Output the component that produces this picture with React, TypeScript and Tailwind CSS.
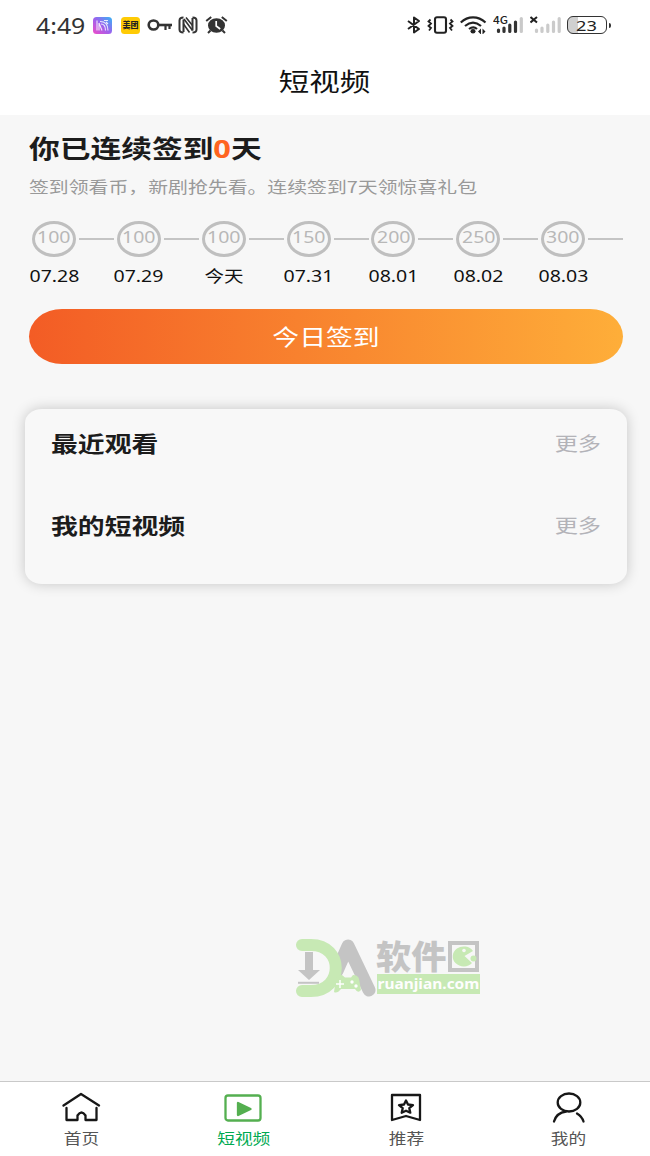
import React from 'react';

interface WideProps {
  children: React.ReactNode;
  className?: string;
}

// Text with the slightly extended letterforms used across the app
const Wide: React.FC<WideProps> = ({ children, className = '' }) => (
  <span className={`inline-block whitespace-nowrap scale-x-[1.22] ${className}`}>{children}</span>
);

const days = [
  { coins: 100, label: '07.28' },
  { coins: 100, label: '07.29' },
  { coins: 100, label: '今天' },
  { coins: 150, label: '07.31' },
  { coins: 200, label: '08.01' },
  { coins: 250, label: '08.02' },
  { coins: 300, label: '08.03' },
];

const StatusBar = () => (
  <div className="flex h-[50px] shrink-0 items-center justify-between pl-9 pr-[39px]">
    <div className="flex items-center">
      <span className="w-[57px] font-['Noto_Sans'] text-[22px] leading-[48px] text-[#333]">
        <span className="inline-block origin-left scale-x-[1.13]">4:49</span>
      </span>
      <svg width="19" height="17" viewBox="0 0 19 17">
        <defs>
          <linearGradient id="app" x1="0" y1="1" x2="1" y2="0">
            <stop offset="0" stopColor="#f04bc8" />
            <stop offset="0.5" stopColor="#9b62ee" />
            <stop offset="1" stopColor="#34b5f5" />
          </linearGradient>
        </defs>
        <rect width="19" height="17" rx="3.5" fill="url(#app)" />
        <g fill="none" stroke="#fff" strokeWidth="1.1" opacity="0.85">
          <path d="M4 3.500v10M6 6v7.500M6 6l3 7.500M7 4.500c5 0 8 3 8 9M8 7c3 0 4.500 3 4.500 6.500M11 3.500h4M13 5l2 2" />
        </g>
      </svg>
      <span className="ml-[9px] flex h-[17px] w-[19px] items-center justify-center rounded-[3.5px] bg-[#ffcb05] text-[8px] font-black leading-none text-[#222]">
        美团
      </span>
      <svg className="ml-[7px]" width="26" height="16" viewBox="0 0 26 16">
        <ellipse cx="6.500" cy="8" rx="4.800" ry="4.500" fill="none" stroke="#333" strokeWidth="2.600" />
        <path d="M11 8h14" stroke="#333" strokeWidth="2.600" />
        <path d="M18.500 8v5M22.500 8v4" stroke="#333" strokeWidth="2.200" />
      </svg>
      <svg className="ml-[5px]" width="20" height="18" viewBox="0 0 20 18">
        <g fill="none" stroke="#333" strokeWidth="2">
          <path d="M5.500 1.500Q1.500 1.500 1.500 4.500v9q0 3 4 3M14.500 1.500q4 0 4 3v9q0 3-4 3" />
          <path d="M5.500 16V3.500M14.500 2v12.500" />
          <path d="M6 3l8.500 11.500M8 1.500l6.500 8M5.500 8l6 8.500" strokeWidth="1.600" />
        </g>
      </svg>
      <svg className="ml-[7px]" width="23" height="18" viewBox="0 0 23 18">
        <ellipse cx="11.500" cy="9.500" rx="8.500" ry="7.300" fill="#333" />
        <path d="M1.200 5l5-4M21.800 5l-5-4M5.500 14.500l-2.500 2.500M17.500 14.500l2.500 2.500" stroke="#333" strokeWidth="2" />
        <path d="M11.200 5v5l4 3" fill="none" stroke="#fff" strokeWidth="1.700" />
      </svg>
    </div>
    <div className="flex items-center">
      <svg width="14" height="18" viewBox="0 0 14 18" fill="none" stroke="#222" strokeWidth="2">
        <path d="M1 5l11 8-5 3.500V1.500L12 5 1 13" strokeLinejoin="round" />
      </svg>
      <svg className="ml-[6px]" width="27" height="18" viewBox="0 0 27 18" fill="none" stroke="#222">
        <rect x="8" y="1.200" width="11" height="15.600" rx="2" strokeWidth="2.100" />
        <path d="M3.500 3.500l-2 2 2.500 2-2.500 2.500 2.500 2-2 2.500M23.500 3.500l2 2-2.500 2 2.500 2.500-2.500 2 2 2.500" strokeWidth="1.800" />
      </svg>
      <svg className="ml-[6px]" width="27" height="18" viewBox="0 0 27 18" fill="none" stroke="#222">
        <path d="M.8 6.500C8-.3 18-.3 25.500 6.500M5 10c5-4.200 11-4.200 16 0M9 13c3-2.300 5.500-2.300 8 0" strokeWidth="2.200" />
        <ellipse cx="13" cy="15.300" rx="2.500" ry="2.200" fill="#222" stroke="none" />
        <path d="M18 15.500l3-3v6zM22.500 12.500v6l3-3z" fill="#222" stroke="none" />
      </svg>
      <div className="relative ml-[6px] h-[18px] w-[30px]">
        <svg width="30" height="18" viewBox="0 0 30 18" strokeWidth="3.200" strokeLinecap="round" stroke="#333">
          <path d="M5.500 14v1.500M11 12v3.500M16.800 9v6.500M22.500 6v9.500" />
          <path d="M28.300 2.500v13" stroke="#c9c9c9" />
        </svg>
        <span className="absolute left-0 -top-px origin-left scale-x-[1.12] text-[10.500px] font-medium leading-none text-[#222]">4G</span>
      </div>
      <svg className="ml-[7px]" width="31" height="18" viewBox="0 0 31 18" strokeWidth="3.200" strokeLinecap="round" stroke="#cbcbcb">
        <path d="M6.500 14v1.500M12 12v3.500M17.800 9v6.500M23.500 6v9.500M29.200 2.500v13" />
        <path d="M.5 1l6.500 5.500M7 1L.5 6.500" stroke="#222" strokeWidth="2" strokeLinecap="butt" />
      </svg>
      <div className="ml-[6px] flex items-center">
        <div className="flex h-[18px] w-[40px] items-center justify-center rounded-[6px] border-[1.5px] border-[#333] bg-linear-to-r from-[#d0d0d0] from-25% to-white to-25% font-['Noto_Sans'] text-[15px] leading-none text-[#222]">
          <span className="scale-x-[1.22]">23</span>
        </div>
        <div className="ml-[2px] h-[5px] w-[2px] rounded-r bg-[#333]" />
      </div>
    </div>
  </div>
);

const CheckIn = () => (
  <section className="pl-[29px] pr-[27px] pt-[13px]">
    <h1 className="h-[40px] text-[25.2px] font-bold leading-[39px] text-[#1c1c1c]">
      <Wide className="origin-left">
        你已连续签到<span className="font-['Noto_Sans'] text-[#ff6420]">0</span>天
      </Wide>
    </h1>
    <p className="h-[37px] text-[16.3px] leading-[36px] text-[#999]">
      <Wide className="origin-left">签到领看币，新剧抢先看。连续签到7天领惊喜礼包</Wide>
    </p>
    <div className="mt-4 grid grid-cols-7">
      {days.map((day) => (
        <div key={day.label}>
          <div className="flex items-center gap-[3px] pl-[3px]">
            <div className="flex h-9 w-11 shrink-0 items-center justify-center rounded-[50%] border-[3px] border-[#bfbfbf] pb-[5px] font-['Noto_Sans'] text-[16px] leading-none text-[#b8b8b8]">
              <Wide>{day.coins}</Wide>
            </div>
            <div className="h-[1.5px] w-[35px] shrink-0 bg-[#c4c4c4]" />
          </div>
          <div className="flex h-[38px] w-[50px] items-center justify-center font-['Noto_Sans','Noto_Sans_CJK_SC',sans-serif] text-[16px] leading-none text-[#111]">
            <Wide>{day.label}</Wide>
          </div>
        </div>
      ))}
    </div>
    <button className="mt-[14px] flex h-[55px] w-full items-center justify-center rounded-[33px/27.5px] bg-linear-to-r/srgb from-[#f35c25] to-[#feae39] pb-1 text-[22px] leading-none text-white">
      <Wide>今日签到</Wide>
    </button>
  </section>
);

const ListRow = ({ title }: { title: string }) => (
  <div className="flex h-[82px] items-start justify-between">
    <h2 className="text-[22px] font-bold leading-[32px] text-[#1c1c1c]">
      <Wide className="origin-left">{title}</Wide>
    </h2>
    <span className="text-[19px] leading-[34px] text-[#b3b3b8]">
      <Wide className="origin-right">更多</Wide>
    </span>
  </div>
);

const Logo = () => (
  <div className="absolute left-[295px] top-[937px] flex opacity-90">
    <svg width="82" height="61" viewBox="0 0 82 61" fill="none">
      <path d="M42 34L53 9l21 44" stroke="#bfbfbf" strokeWidth="13" strokeLinecap="round" strokeLinejoin="round" />
      <path d="M7 8H16C49 8 49 54 16 54H7" stroke="#c2e8ad" strokeWidth="12" strokeLinecap="round" />
      <path d="M10 15h8v18h7L14 43 3 33h7z" fill="#bfbfbf" />
      <path d="M3 45.800h21" stroke="#bfbfbf" strokeWidth="2" />
      <path d="M39 55L41 42Q42 38 47 38L50 40.500H56L58 38Q63 38 64 42L66 53Q63 57 60 52H46Q42 57 39 55z" fill="#c2e8ad" />
      <path d="M45 43v8M41 47h8" stroke="#fff" strokeWidth="1.500" />
      <circle cx="57" cy="45" r="1.700" fill="#fff" />
      <circle cx="61" cy="49" r="1.700" fill="#fff" />
    </svg>
    <div className="w-[103px] pt-[3px]">
      <div className="flex h-[34px] justify-between">
        <span className="-ml-px w-[70px] text-[33.500px] font-black leading-[30px] text-[#bfbfbf]">
          <span className="inline-block h-[32px] origin-left scale-x-[1.05] whitespace-nowrap">软件</span>
        </span>
        <svg width="33" height="34" viewBox="0 0 33 34">
          <rect x="3" y="3" width="27" height="27" fill="none" stroke="#bfbfbf" strokeWidth="4" />
          <path d="M26 11A11 10 0 1 0 25 23L17.500 16z" fill="#c2e8ad" />
          <circle cx="26.500" cy="18.500" r="3" fill="#c2e8ad" />
          <circle cx="17" cy="10.500" r="1.800" fill="#f7f7f7" />
        </svg>
      </div>
      <div className="flex h-[20px] justify-center bg-[#c2e8ad] font-['Noto_Sans'] text-[15px] font-bold leading-[18px] text-white">
        <span className="inline-block scale-x-[1.03]">ruanjian.com</span>
      </div>
    </div>
  </div>
);

const tabs = [
  {
    label: '首页',
    icon: (
      <path d="M1.500 14.500L19 3l18 11.500M4.500 17v12h11v-4.500q4-6 8 0V29h11V17" />
    ),
  },
  {
    label: '短视频',
    active: true,
    icon: (
      <>
        <rect x="1.500" y="4.500" width="35" height="25" rx="2.500" />
        <path d="M14 12v12l12.500-6z" fill="currentColor" />
      </>
    ),
  },
  {
    label: '推荐',
    icon: (
      <>
        <path d="M5 4h28v25l-14-4-14 4z" />
        <path d="M19 9.500l2 4 5 .7-3.700 3 1 4.500-4.300-2-4.300 2 1-4.500-3.700-3 5-.7z" />
      </>
    ),
  },
  {
    label: '我的',
    icon: (
      <>
        <ellipse cx="20" cy="11.500" rx="11.300" ry="9" />
        <path d="M5 30.500C6.500 25 10 21.500 17 20.500M28 22.500q5 3 6.500 8" />
      </>
    ),
  },
];

const TabBar = () => (
  <nav className="grid h-[75px] shrink-0 grid-cols-4 border-t border-[#c9c9c9] bg-white">
    {tabs.map((tab) => (
      <div key={tab.label} className={`flex flex-col items-center pt-[9px] ${tab.active ? 'text-[#00a951]' : 'text-[#555]'}`}>
        <svg
          className={tab.active ? 'text-[#54af50]' : 'text-[#171717]'}
          width="39"
          height="34"
          viewBox="0 0 39 34"
          fill="none"
          stroke="currentColor"
          strokeWidth="2.300"
          strokeLinecap="round"
          strokeLinejoin="round"
        >
          {tab.icon}
        </svg>
        <span className="mt-px text-[14.5px] leading-[24px]">
          <Wide>{tab.label}</Wide>
        </span>
      </div>
    ))}
  </nav>
);

export default function App() {
  return (
    <div className="relative flex h-[1156px] w-[650px] flex-col overflow-hidden bg-white font-['Noto_Sans_CJK_SC',sans-serif]">
      <StatusBar />
      <header className="flex h-[65px] shrink-0 items-center justify-center pb-1 text-[25px] leading-none text-[#111]">
        <Wide>短视频</Wide>
      </header>
      <main className="flex-1 bg-[#f7f7f7]">
        <CheckIn />
        <section className="ml-[25px] mr-[23px] mt-[45px] h-[175px] rounded-[17px/14px] bg-[#f8f8f8] px-[26px] pt-[17px] shadow-[0_0_14px_rgba(0,0,0,0.2)]">
          <ListRow title="最近观看" />
          <ListRow title="我的短视频" />
        </section>
      </main>
      <Logo />
      <TabBar />
    </div>
  );
}
